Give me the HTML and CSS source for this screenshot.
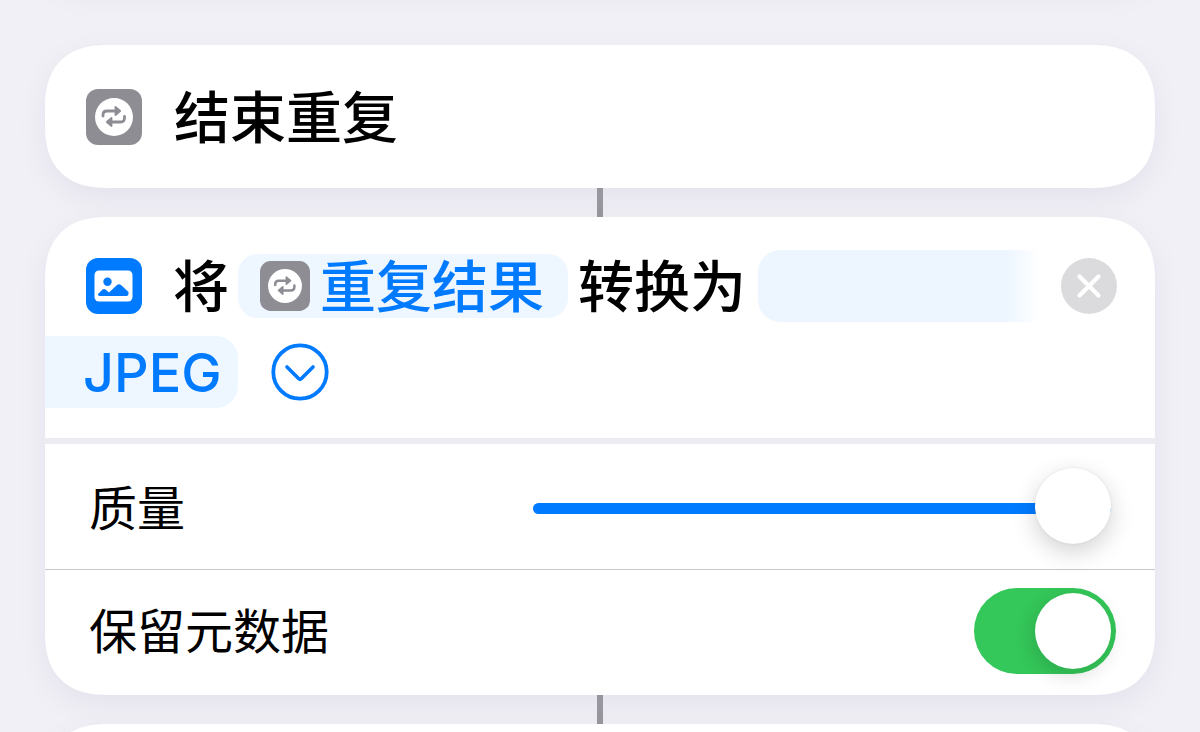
FILE: index.html
```html
<!DOCTYPE html>
<html lang="zh-CN">
<head>
<meta charset="utf-8">
<meta name="viewport" content="width=device-width, initial-scale=1">
<title>快捷指令</title>
<link rel="stylesheet" href="styles.css">
</head>
<body>
<svg class="symbols" aria-hidden="true">
  <symbol id="repeat" viewBox="0 0 56 56">
    <rect width="56" height="56" rx="12" fill="#8e8d94"/>
    <circle cx="28" cy="28" r="19" fill="#fff"/>
    <g fill="none" stroke="#8e8d94" stroke-width="2.8" stroke-linecap="round" stroke-linejoin="round">
      <path d="M17 27v-1q0-4 4-4H30"/>
      <path d="M38.500 27.500v1.500q0 4-4 4H26"/>
    </g>
    <g fill="#8e8d94" stroke="#8e8d94" stroke-width="1.800" stroke-linejoin="round">
      <path d="M29.500 18l4.700 4-4.700 4z"/>
      <path d="M25.500 29l-4.700 4 4.700 4z"/>
    </g>
  </symbol>
</svg>
<main class="flow">
  <div class="card card--previous"></div>

  <section class="card action">
    <div class="action__line">
      <svg class="icon" aria-hidden="true"><use href="#repeat"/></svg>
      <h2 class="title">结束重复</h2>
    </div>
  </section>

  <div class="connector"></div>

  <section class="card">
    <div class="convert">
      <div class="convert__line">
        <svg class="icon" viewBox="0 0 56 56" aria-hidden="true">
          <rect width="56" height="56" rx="12" fill="#007aff"/>
          <rect x="8.500" y="12.500" width="38" height="31" rx="4.500" fill="#fff"/>
          <circle cx="21.500" cy="23.700" r="4.200" fill="#007aff"/>
          <path d="M12 37.500v-1.500l4.500-4.500q1.500-1.200 3 0l3.500 3 8-7.500q2-1.600 4 0l7.500 7v2q0 2-2 2H14q-2 0-2-1.500z" fill="#007aff"/>
        </svg>
        <span class="title title--verb">将</span>
        <button class="chip chip--variable" type="button">
          <svg class="chip__icon" aria-hidden="true"><use href="#repeat"/></svg>
          <span>重复结果</span>
        </button>
        <span class="title title--into">转换为</span>
        <span class="chip-start"></span>
        <button class="close" type="button" aria-label="删除">
          <svg viewBox="0 0 56 56" aria-hidden="true">
            <circle cx="28" cy="28" r="28" fill="#dbdbde"/>
            <path d="M18.500 18.500l19 19m0-19l-19 19" stroke="#fff" stroke-width="4.200" stroke-linecap="round"/>
          </svg>
        </button>
      </div>
      <div class="convert__line">
        <button class="chip chip--format" type="button">JPEG</button>
        <button class="disclosure" type="button" aria-label="收起选项">
          <svg viewBox="0 0 58 58" aria-hidden="true" fill="none" stroke="#007aff" stroke-linecap="round" stroke-linejoin="round">
            <circle cx="29" cy="29" r="26.700" stroke-width="3.800"/>
            <path d="M16 24l11.800 11.800q1.200 1.200 2.400 0L42 24" stroke-width="3.600"/>
          </svg>
        </button>
      </div>
    </div>

    <div class="option option--quality">
      <label class="option__label" for="quality">质量</label>
      <input class="slider" id="quality" type="range" min="0" max="100" value="100">
    </div>
    <div class="option option--metadata">
      <label class="option__label" for="metadata">保留元数据</label>
      <input class="switch" id="metadata" type="checkbox" role="switch" checked>
    </div>
  </section>

  <div class="connector"></div>

  <div class="card card--next"></div>
</main>
</body>
</html>
```
FILE: styles.css
```css
* {
  box-sizing: border-box;
}

html {
  height: 100%;
  overflow: hidden;
}

body {
  margin: 0;
  height: 100%;
  overflow: hidden;
  background: #f1f0f7;
  color: #000;
  font-family: Inter, "Noto Sans CJK SC", sans-serif;
}

button {
  margin: 0;
  padding: 0;
  border: 0;
  background: none;
  font: inherit;
  cursor: pointer;
}

button svg {
  display: block;
  width: 100%;
  height: 100%;
}

.symbols {
  display: none;
}

.flow {
  display: flex;
  flex-direction: column;
  height: 100%;
  padding: 0 45px;
  overflow: hidden;
}

.card {
  flex: none;
  border-radius: 54px;
  background: #fff;
  box-shadow: 0 10px 32px rgba(20, 15, 50, 0.06);
}

@supports (corner-shape: superellipse(1.3)) {
  .card {
    border-radius: 64px;
    corner-shape: superellipse(1.3);
  }
}

.card--previous {
  height: 100px;
  margin-top: -116px;
  margin-bottom: 61px;
}

.card--next {
  height: 144px;
}

.connector {
  flex: none;
  align-self: center;
  width: 6px;
  height: 29px;
  background: #97979e;
}

.action {
  padding: 36px 41px 35px;
}

.action__line {
  display: flex;
  align-items: center;
  gap: 32px;
  height: 72px;
}

.icon {
  flex: none;
  width: 56px;
  height: 56px;
}

.title {
  margin: 0;
  padding-top: 2px;
  font-size: 56px;
  font-weight: 500;
  line-height: 72px;
  white-space: nowrap;
}

.convert {
  display: flex;
  flex-direction: column;
  gap: 14px;
  padding: 33px 0 30px;
}

.convert__line {
  display: flex;
  align-items: center;
  height: 72px;
}

.convert__line .icon {
  margin-left: 41px;
}

.title--verb {
  margin-left: 31px;
}

.title--into {
  margin-left: 10px;
}

.chip {
  display: flex;
  align-items: center;
  background: #eef6ff;
  color: #007aff;
  font-size: 56px;
  font-weight: 500;
  line-height: 64px;
  white-space: nowrap;
}

.chip--variable {
  gap: 10px;
  height: 64px;
  margin-left: 9px;
  padding: 0 24px 0 22px;
  border-radius: 20px;
}

.chip--variable span {
  padding-top: 2px;
}

.chip__icon {
  flex: none;
  width: 50px;
  height: 50px;
}

.chip-start {
  flex: 1;
  height: 72px;
  margin-left: 12px;
  border-radius: 22px 0 0 22px;
  background: linear-gradient(to right, #edf6ff calc(100% - 32px), #fff);
}

.close {
  flex: none;
  width: 56px;
  height: 56px;
  margin: 0 38px 0 22px;
}

.chip--format {
  height: 72px;
  padding: 2px 16px 0 38px;
  border-radius: 0 22px 22px 0;
  font-size: 54px;
}

.disclosure {
  width: 58px;
  height: 58px;
  margin-left: 33px;
}

.option {
  display: flex;
  align-items: center;
  justify-content: space-between;
  padding-left: 44px;
}

.option--quality {
  height: 132px;
  padding-top: 3px;
  padding-right: 44px;
  border-top: 6px solid #ecebf1;
  border-bottom: 1px solid #c8c8cb;
}

.option--metadata {
  height: 125px;
  padding-right: 39px;
  padding-bottom: 3px;
}

.option__label {
  padding-top: 2px;
  font-size: 48px;
  line-height: 64px;
}

.slider {
  appearance: none;
  width: 57%;
  max-width: 578px;
  height: 76px;
  margin: 0;
  background: none;
}

.slider::-webkit-slider-runnable-track {
  height: 11px;
  border-radius: 6px;
  background: #007aff;
}

.slider::-webkit-slider-thumb {
  appearance: none;
  width: 76px;
  height: 76px;
  margin-top: -35px;
  border-radius: 50%;
  background: #fff;
  box-shadow: 0 8px 24px rgba(0, 0, 0, 0.18), 0 0 3px rgba(0, 0, 0, 0.08);
}

.switch {
  appearance: none;
  display: flex;
  justify-content: flex-end;
  width: 142px;
  height: 86px;
  margin: 0;
  padding: 5px;
  border-radius: 43px;
  background: #34c759;
}

.switch::before {
  content: "";
  width: 76px;
  height: 76px;
  border-radius: 50%;
  background: #fff;
  box-shadow: -2px 6px 20px rgba(0, 0, 0, 0.15);
}

.switch:not(:checked) {
  justify-content: flex-start;
  background: #e9e9eb;
}
```
